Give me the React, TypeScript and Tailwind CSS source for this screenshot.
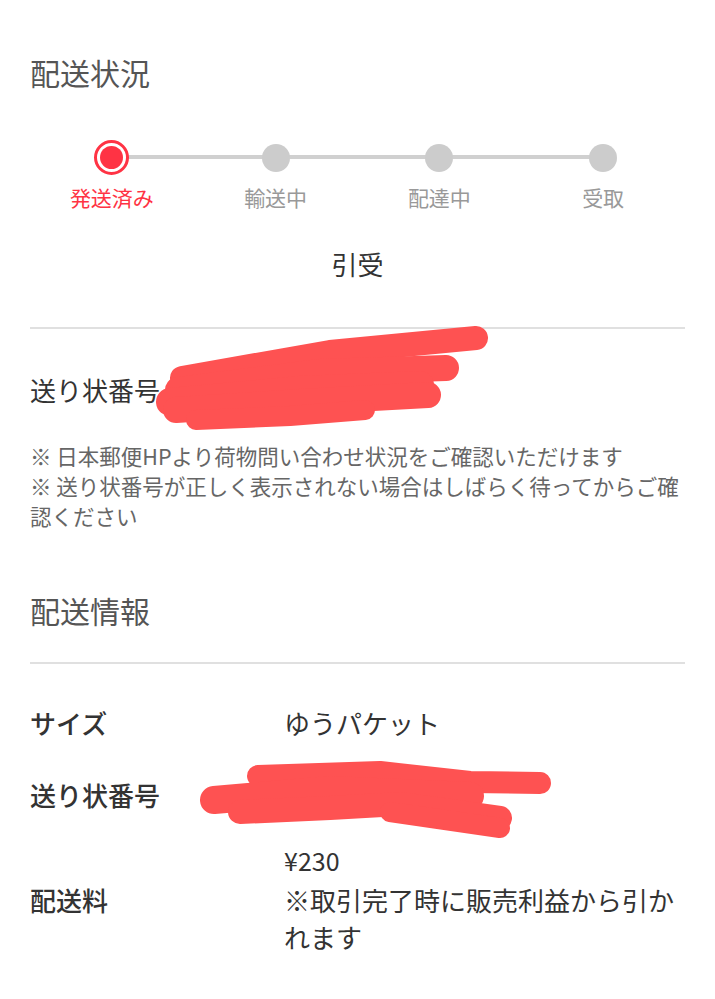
import React from 'react';

const steps = [
  { label: '発送済み', active: true },
  { label: '輸送中', active: false },
  { label: '配達中', active: false },
  { label: '受取', active: false },
];

const notes = [
  '※ 日本郵便HPより荷物問い合わせ状況をご確認いただけます',
  '※ 送り状番号が正しく表示されない場合はしばらく待ってからご確認ください',
];

function Stepper() {
  return (
    <div className="mt-[48px]">
      <div className="relative grid grid-cols-4 h-[34px]">
        {/* track */}
        <div className="absolute left-[82px] right-[82px] top-[15px] h-[4px] bg-[#d0d0d0]" />
        {steps.map((s) => (
          <div key={s.label} className="relative flex items-center justify-center">
            {s.active ? (
              <div className="w-[35px] h-[35px] rounded-full border-[3px] border-[#ff3344] bg-white flex items-center justify-center">
                <div className="w-[23px] h-[23px] rounded-full bg-[#ff3344]" />
              </div>
            ) : (
              <div className="w-[28px] h-[28px] rounded-full bg-[#cccccc]" />
            )}
          </div>
        ))}
      </div>
      <div className="grid grid-cols-4 mt-[9px]">
        {steps.map((s) => (
          <div
            key={s.label}
            className={`text-center text-[21px] leading-[28px] ${s.active ? 'text-[#ff3344]' : 'text-[#999999]'}`}
          >
            {s.label}
          </div>
        ))}
      </div>
    </div>
  );
}

function Redactions() {
  return (
    <svg
      className="absolute inset-0 pointer-events-none"
      width="715"
      height="999"
      viewBox="0 0 715 999"
      fill="none"
      stroke="#fe5252"
      strokeLinecap="round"
      strokeLinejoin="round"
    >
      {/* first tracking number scribble */}
      <path d="M182 378 L330 352 L476 338" strokeWidth="24" />
      <path d="M178 390 L320 372 L446 368" strokeWidth="26" />
      <path d="M170 402 L300 390 L420 385" strokeWidth="28" />
      <path d="M176 410 L300 402 L428 395" strokeWidth="26" />
      <path d="M196 420 L290 416 L365 410" strokeWidth="20" />
      {/* second tracking number scribble */}
      <path d="M258 776 L380 772 L470 782 L540 783" strokeWidth="22" />
      <path d="M214 800 L330 790 L470 796" strokeWidth="28" />
      <path d="M240 812 L330 808 L400 804 L500 818" strokeWidth="24" />
      <path d="M390 812 L500 828" strokeWidth="20" />
    </svg>
  );
}

export default function App() {
  return (
    <div
      className="relative min-h-screen bg-white px-[30px] pb-[40px] text-[#333333]"
      style={{ fontFamily: '"Noto Sans CJK JP", "Noto Sans", sans-serif' }}
    >
      {/* 配送状況 */}
      <h2 className="pt-[52px] text-[30px] leading-[40px] text-[#555555]">配送状況</h2>
      <Stepper />
      <div className="mt-[35px] text-center text-[26px] leading-[36px] text-[#333333]">引受</div>

      <div className="mt-[45px] h-[2px] bg-[#e0e0e0]" />

      <div className="mt-[43px] text-[26px] leading-[36px] text-[#333333]">送り状番号</div>

      <div className="mt-[33px] text-[21.5px] leading-[30px] text-[#666666]">
        {notes.map((n) => (
          <p key={n}>{n}</p>
        ))}
      </div>

      {/* 配送情報 */}
      <h2 className="mt-[59px] text-[30px] leading-[40px] text-[#555555]">配送情報</h2>
      <div className="mt-[32px] h-[2px] bg-[#e0e0e0]" />

      <div className="mt-[41px] grid grid-cols-[254px_1fr] items-center">
        <div className="text-[26px] leading-[36px] font-medium">サイズ</div>
        <div className="text-[26px] leading-[36px]">ゆうパケット</div>
      </div>

      <div className="mt-[36px] grid grid-cols-[254px_1fr] items-center">
        <div className="text-[26px] leading-[36px] font-medium">送り状番号</div>
        <div className="h-[36px]" />
      </div>

      <div className="mt-[32px] grid grid-cols-[254px_1fr] items-center">
        <div className="text-[26px] leading-[36px] font-medium">配送料</div>
        <div>
          <div className="text-[25px] leading-[30px]">¥230</div>
          <div className="mt-[6px] text-[26px] leading-[37px]">※取引完了時に販売利益から引かれます</div>
        </div>
      </div>

      <Redactions />
    </div>
  );
}
